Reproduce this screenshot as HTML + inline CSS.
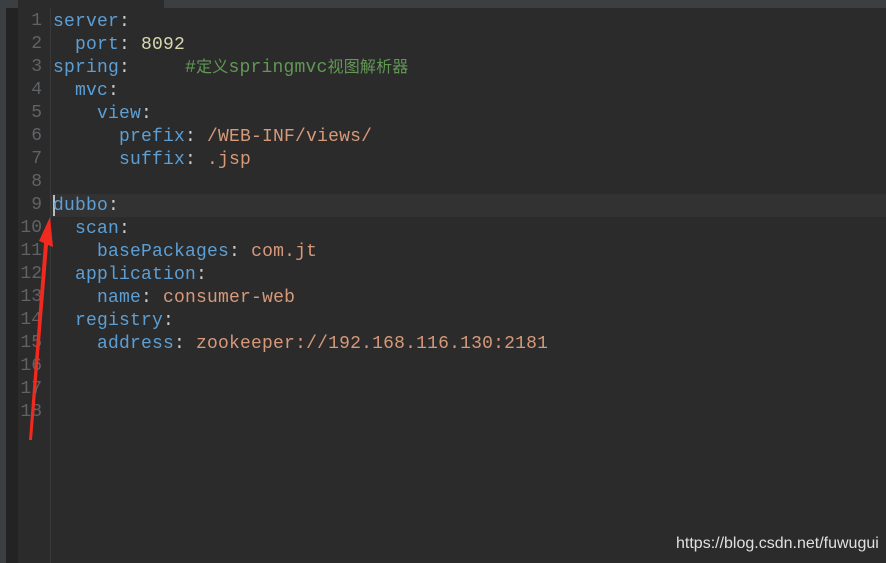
<!DOCTYPE html>
<html><head><meta charset="utf-8"><style>
body{margin:0;width:886px;height:563px;background:#2b2b2b;position:relative;overflow:hidden;font-family:"Liberation Mono","Noto Sans CJK SC",monospace;}
.l{position:absolute;left:0;width:886px;height:23px;line-height:23px;font-size:18px;white-space:pre;letter-spacing:0.2px;}
.n{position:absolute;left:18px;width:24px;text-align:right;color:#606366;letter-spacing:0}
.c{position:absolute;left:53px;top:1px}
.k{color:#5d9fd4}.p{color:#ccc}.v{color:#d7997a}.num{color:#d8d8b0}.cm{color:#629755}
</style></head><body>
<div style="position:absolute;left:0;top:0;width:6px;height:563px;background:#3c3f41"></div>
<div style="position:absolute;left:6px;top:0;width:12px;height:563px;background:#232323"></div>
<div style="position:absolute;left:0;top:0;width:886px;height:8px;background:#3c3f41"></div>
<div style="position:absolute;left:18px;top:0;width:146px;height:8px;background:#2b2b2b"></div>
<div style="position:absolute;left:50px;top:8px;width:1px;height:555px;background:#3a3a3a"></div>
<div style="position:absolute;left:51px;top:194px;width:835px;height:23px;background:#323232"></div>
<div style="position:absolute;left:53px;top:195px;width:2px;height:21px;background:#bbb"></div>

<div class="l" style="top:10px"><span class="n">1</span><span class="c"><span class="k">server</span><span class="p">:</span></span></div>
<div class="l" style="top:33px"><span class="n">2</span><span class="c">  <span class="k">port</span><span class="p">: </span><span class="num">8092</span></span></div>
<div class="l" style="top:56px"><span class="n">3</span><span class="c"><span class="k">spring</span><span class="p">:</span>     <span class="cm">#<span style="font-size:16px">定义</span>springmvc<span style="font-size:16px">视图解析器</span></span></span></div>
<div class="l" style="top:79px"><span class="n">4</span><span class="c">  <span class="k">mvc</span><span class="p">:</span></span></div>
<div class="l" style="top:102px"><span class="n">5</span><span class="c">    <span class="k">view</span><span class="p">:</span></span></div>
<div class="l" style="top:125px"><span class="n">6</span><span class="c">      <span class="k">prefix</span><span class="p">: </span><span class="v">/WEB-INF/views/</span></span></div>
<div class="l" style="top:148px"><span class="n">7</span><span class="c">      <span class="k">suffix</span><span class="p">: </span><span class="v">.jsp</span></span></div>
<div class="l" style="top:171px"><span class="n">8</span></div>
<div class="l" style="top:194px"><span class="n">9</span><span class="c"><span class="k">dubbo</span><span class="p">:</span></span></div>
<div class="l" style="top:217px"><span class="n">10</span><span class="c">  <span class="k">scan</span><span class="p">:</span></span></div>
<div class="l" style="top:240px"><span class="n">11</span><span class="c">    <span class="k">basePackages</span><span class="p">: </span><span class="v">com.jt</span></span></div>
<div class="l" style="top:263px"><span class="n">12</span><span class="c">  <span class="k">application</span><span class="p">:</span></span></div>
<div class="l" style="top:286px"><span class="n">13</span><span class="c">    <span class="k">name</span><span class="p">: </span><span class="v">consumer-web</span></span></div>
<div class="l" style="top:309px"><span class="n">14</span><span class="c">  <span class="k">registry</span><span class="p">:</span></span></div>
<div class="l" style="top:332px"><span class="n">15</span><span class="c">    <span class="k">address</span><span class="p">: </span><span class="v">zookeeper://192.168.116.130:2181</span></span></div>
<div class="l" style="top:355px"><span class="n">16</span></div>
<div class="l" style="top:378px"><span class="n">17</span></div>
<div class="l" style="top:401px"><span class="n">18</span></div>

<svg style="position:absolute;left:0;top:0" width="886" height="563">
<polygon points="29,440 32,440 48,245 53,247 50,217 39,241 44,243" fill="#f02a1e"/>
</svg>
<div style="position:absolute;left:676px;top:535px;font:16px 'Liberation Sans',sans-serif;color:#e0e0e0">https://blog.csdn.net/fuwugui</div>
</body></html>
